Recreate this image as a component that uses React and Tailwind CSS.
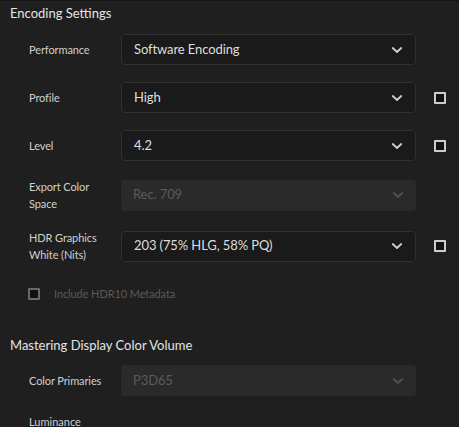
import React from "react";

const font = { fontFamily: "Lato, 'Open Sans', sans-serif" };

function Chevron({ disabled }) {
  return (
    <svg width="12" height="8" viewBox="0 0 12 8" className="shrink-0">
      <path d="M1.75 2 L6 6 L10.25 2" fill="none" stroke={disabled ? "#4f4f4f" : "#cfcfcf"} strokeWidth="1.8" strokeLinecap="round" strokeLinejoin="round" />
    </svg>
  );
}

function Select({ value, disabled }) {
  return (
    <div
      className={
        "w-[295px] h-[31px] shrink-0 rounded-[4px] flex items-center justify-between pl-[12px] pr-[12px] text-[13px] tracking-[-0.1px] " +
        (disabled ? "bg-[#2a2a2a] text-[#5a5a5a]" : "bg-[#1a1a1a] border border-[#303030] text-[#dedede]")
      }
    >
      <span>{value}</span>
      <Chevron disabled={disabled} />
    </div>
  );
}

function Check({ disabled }) {
  return (
    <div
      className={
        "w-[12px] h-[12px] rounded-[1px] border-2 bg-[#111] " +
        (disabled ? "border-[#6a6a6a]" : "border-[#cdcdcd]")
      }
    />
  );
}

function Row({ label, value, disabled, check }) {
  return (
    <div className="flex items-center min-h-[31px]">
      <div className="w-[92px] shrink-0 text-[11px] tracking-[-0.1px] leading-[17px] text-[#cfcfcf]">{label}</div>
      <Select value={value} disabled={disabled} />
      {check && (
        <div className="ml-[18px]">
          <Check />
        </div>
      )}
    </div>
  );
}

export default function App() {
  return (
    <div className="w-[459px] h-[427px] overflow-hidden bg-[#1f1f1f] border-t border-[#141414]" style={font}>
      <div className="pl-[10px] pt-[2px] h-[20px] leading-[20px] text-[13px] text-[#e4e4e4]">Encoding Settings</div>
      <div className="pl-[29px] mt-[13px] flex flex-col gap-[17px]">
        <Row label="Performance" value="Software Encoding" />
        <Row label="Profile" value="High" check />
        <Row label="Level" value="4.2" check />
        <Row label={<>Export Color<br />Space</>} value="Rec. 709" disabled />
        <Row label={<>HDR Graphics<br />White (Nits)</>} value="203 (75% HLG, 58% PQ)" check />
      </div>
      <div className="pl-[28px] mt-[21px] h-[20px] flex items-center gap-[14px]">
        <Check disabled />
        <span className="text-[11px] tracking-[-0.1px] text-[#5a5a5a]">Include HDR10 Metadata</span>
      </div>
      <div className="pl-[10px] mt-[31px] h-[20px] leading-[20px] text-[13px] text-[#e4e4e4]">Mastering Display Color Volume</div>
      <div className="pl-[29px] mt-[10px]">
        <Row label="Color Primaries" value="P3D65" disabled />
      </div>
      <div className="pl-[29px] mt-[16px] h-[20px] leading-[20px] text-[11px] text-[#cfcfcf]">Luminance</div>
    </div>
  );
}
